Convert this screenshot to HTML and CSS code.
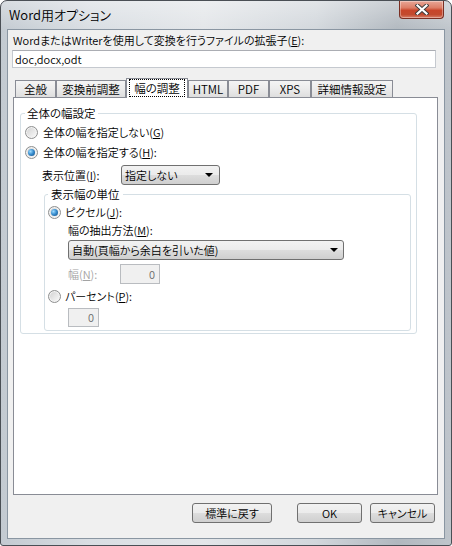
FILE: index.html
```html
<!DOCTYPE html>
<html lang="ja">
<head>
<meta charset="utf-8">
<title>Word用オプション</title>
<link rel="stylesheet" href="styles.css">
</head>
<body>
<div class="window">
  <div class="titlebar">
    <span class="title">Word用オプション</span>
    <div class="close">
      <svg width="14" height="11" viewBox="0 0 14 11">
        <path d="M2.5 1.5 L11.5 9.5 M11.5 1.5 L2.5 9.5" stroke="#3b3b3b" stroke-width="4" stroke-linecap="square"/>
        <path d="M2.5 1.5 L11.5 9.5 M11.5 1.5 L2.5 9.5" stroke="#ffffff" stroke-width="2.2" stroke-linecap="square"/>
      </svg>
    </div>
  </div>
  <div class="client">
    <div class="ext-label">WordまたはWriterを使用して変換を行うファイルの拡張子(<u>E</u>):</div>
    <div class="textbox">doc,docx,odt</div>
    <div class="tabs">
      <div class="tab tab-1">全般</div>
      <div class="tab tab-2">変換前調整</div>
      <div class="tab tab-3 selected"><span class="focus">幅の調整</span></div>
      <div class="tab tab-4">HTML</div>
      <div class="tab tab-5">PDF</div>
      <div class="tab tab-6">XPS</div>
      <div class="tab tab-7">詳細情報設定</div>
    </div>
    <div class="panel">
      <fieldset class="group outer">
        <legend>全体の幅設定</legend>
        <div class="radio-row"><span class="radio"></span><span>全体の幅を指定しない(<u>G</u>)</span></div>
        <div class="radio-row"><span class="radio checked"></span><span>全体の幅を指定する(<u>H</u>):</span></div>
        <div class="pos-row">
          <span class="pos-label">表示位置(<u>I</u>):</span>
          <div class="combo pos-combo"><span>指定しない</span><span class="arrow"></span></div>
        </div>
        <fieldset class="group inner">
          <legend>表示幅の単位</legend>
          <div class="radio-row small-gap"><span class="radio checked"></span><span>ピクセル(<u>J</u>):</span></div>
          <div class="method-label">幅の抽出方法(<u>M</u>):</div>
          <div class="combo method-combo"><span>自動(頁幅から余白を引いた値)</span><span class="arrow"></span></div>
          <div class="width-row">
            <span class="width-label">幅(<u>N</u>):</span>
            <div class="numbox w-box">0</div>
          </div>
          <div class="radio-row small-gap pct-row"><span class="radio"></span><span>パーセント(<u>P</u>):</span></div>
          <div class="numbox pct-box">0</div>
        </fieldset>
      </fieldset>
    </div>
    <div class="buttons">
      <div class="btn btn-reset">標準に戻す</div>
      <div class="btn btn-ok">OK</div>
      <div class="btn btn-cancel">キャンセル</div>
    </div>
  </div>
</div>
</body>
</html>
```

FILE: styles.css
```css
html, body {
  margin: 0;
  padding: 0;
  overflow: hidden;
  background: #ffffff;
}

body {
  font-family: "Noto Sans CJK JP", "Noto Sans", sans-serif;
  font-size: 11px;
  font-weight: 350;
  font-feature-settings: "palt";
  color: #000;
}

.window {
  box-sizing: border-box;
  width: 452px;
  height: 546px;
  border: 1px solid #4a4f55;
  border-radius: 7px 7px 3px 3px;
  background:
    linear-gradient(to bottom, rgba(255,255,255,0.35), rgba(255,255,255,0) 30px),
    linear-gradient(to right, #c3cad1 0%, #d9dee3 20%, #e3e6e9 45%, #d2d7dc 70%, #b1b8bf 88%, #bfc5cb 100%);
  display: flex;
  flex-direction: column;
}

.titlebar {
  height: 28px;
  flex: none;
  display: flex;
  align-items: flex-start;
  justify-content: space-between;
  padding: 0 7px 0 8px;
}

.title {
  font-size: 13px;
  line-height: 14px;
  margin-top: 7px;
  color: #000;
}

.close {
  box-sizing: border-box;
  width: 45px;
  height: 18px;
  border: 1px solid #7a2e22;
  border-top: none;
  border-radius: 0 0 4px 4px;
  background: linear-gradient(to bottom, #e8a797 0%, #dc7d66 40%, #c8452a 55%, #c24a2e 80%, #d8806a 100%);
  box-shadow: inset 0 0 0 1px rgba(255,255,255,0.35);
  display: flex;
  align-items: center;
  justify-content: center;
}

.client {
  flex: 1;
  margin: 0 6px 6px 6px;
  border: 1px solid #8a96a2;
  background: #f0f0f0;
  display: flex;
  flex-direction: column;
}

.ext-label {
  margin: 3px 0 0 5px;
  line-height: 14px;
}

.textbox {
  box-sizing: border-box;
  margin: 3px 0 0 4px;
  width: 424px;
  height: 18px;
  border: 1px solid #c5c9cf;
  border-top-color: #abadb3;
  background: #fff;
  padding-left: 2px;
  line-height: 16px;
}

.tabs {
  display: flex;
  align-items: flex-end;
  height: 19px;
  margin: 10px 0 0 7px;
}

.tab {
  box-sizing: border-box;
  height: 17px;
  border: 1px solid #898c95;
  border-bottom: none;
  background: linear-gradient(to bottom, #f4f4f4 0%, #ebebeb 50%, #dedede 100%);
  text-align: center;
  line-height: 16px;
  font-size: 11.5px;
}

.tab-1 { width: 41px; }
.tab-2 { width: 70px; }
.tab-3 { width: 62px; }
.tab-4 { width: 40px; }
.tab-5 { width: 41px; }
.tab-6 { width: 42px; }
.tab-7 { width: 82px; }

.tab.selected {
  height: 20px;
  margin-bottom: -1px;
  background: #ffffff;
  position: relative;
  z-index: 1;
  padding: 0 2px;
}

.focus {
  display: block;
  box-sizing: border-box;
  height: 18px;
  margin-top: 0;
  border: 1px dotted #000;
  line-height: 16px;
}

.panel {
  box-sizing: border-box;
  margin-left: 5px;
  width: 425px;
  height: 398px;
  border: 1px solid #898c95;
  background: #ffffff;
}

.group {
  box-sizing: border-box;
  border: 1px solid #d5dfe5;
  border-radius: 3px;
  min-width: 0;
}

.group legend {
  line-height: 14px;
  padding: 0 2px;
  font-size: 11.5px;
}

.outer {
  margin: 8px 0 0 6px;
  width: 397px;
  padding: 2px 0 2px 4px;
}

.inner {
  margin: 2px 0 0 19px;
  width: 367px;
  padding: 1px 0 3px 3px;
}

.inner legend {
  padding: 0 3px;
}

.radio-row {
  display: flex;
  align-items: center;
  height: 20px;
  gap: 5px;
}

.radio-row.small-gap {
  gap: 4px;
}

.radio {
  box-sizing: border-box;
  width: 13px;
  height: 13px;
  border-radius: 50%;
  border: 1px solid #8e8f8f;
  background: linear-gradient(135deg, #cfcfcf 0%, #e6e6e6 50%, #fbfbfb 100%);
  box-shadow: inset 0 0 0 1px #f4f4f4;
  display: flex;
  align-items: center;
  justify-content: center;
}

.radio.checked::after {
  content: "";
  width: 7px;
  height: 7px;
  border-radius: 50%;
  background: radial-gradient(circle at 35% 35%, #9fdcff 0%, #3a8fd0 45%, #0d4a82 100%);
}

.pos-row {
  display: flex;
  align-items: center;
  height: 20px;
  margin: 3px 0 0 17px;
}

.pos-label {
  width: 79px;
}

.combo {
  box-sizing: border-box;
  height: 20px;
  border: 1px solid #707070;
  border-radius: 3px;
  background: linear-gradient(to bottom, #f2f2f2 0%, #ebebeb 49%, #dddddd 51%, #cfcfcf 100%);
  display: flex;
  align-items: center;
  justify-content: space-between;
  padding: 0 6px 0 3px;
  line-height: 16px;
}

.pos-combo {
  width: 99px;
}

.arrow {
  width: 0;
  height: 0;
  border-left: 4px solid transparent;
  border-right: 4px solid transparent;
  border-top: 4px solid #000;
}

.method-label {
  margin-left: 20px;
  height: 16px;
  line-height: 16px;
}

.method-combo {
  margin: 2px 0 0 20px;
  width: 276px;
  padding-right: 5px;
}

.width-row {
  display: flex;
  align-items: center;
  height: 20px;
  margin: 4px 0 0 20px;
}

.width-label {
  width: 52px;
  color: #a3a3a3;
}

.numbox {
  box-sizing: border-box;
  border: 1px solid #b9bcc0;
  background: #f0f0f0;
  text-align: right;
  padding-right: 4px;
  color: #6d6d6d;
}

.w-box {
  width: 40px;
  height: 20px;
  line-height: 18px;
}

.pct-row {
  margin-top: 2px;
}

.pct-box {
  margin: 2px 0 0 20px;
  width: 31px;
  height: 19px;
  line-height: 17px;
}

.buttons {
  display: flex;
  justify-content: flex-end;
  margin: 8px 9px 0 0;
}

.btn {
  box-sizing: border-box;
  height: 20px;
  border: 1px solid #707070;
  border-radius: 3px;
  background: linear-gradient(to bottom, #f2f2f2 0%, #ebebeb 49%, #dddddd 51%, #cfcfcf 100%);
  display: flex;
  align-items: center;
  justify-content: center;
  line-height: 16px;
}

.btn-reset {
  width: 80px;
  margin-right: 25px;
}

.btn-ok {
  width: 65px;
  margin-right: 8px;
}

.btn-cancel {
  width: 65px;
}
```
